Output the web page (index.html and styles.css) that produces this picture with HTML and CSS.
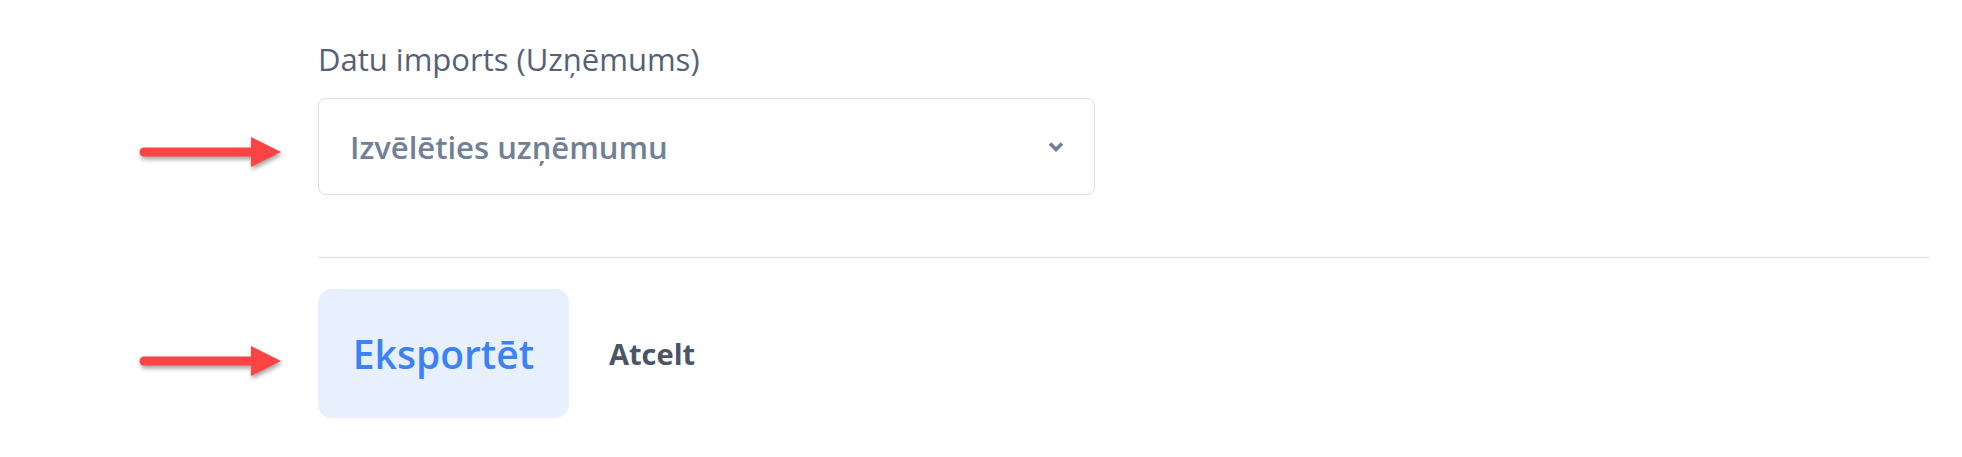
FILE: index.html
```html
<!DOCTYPE html>
<html lang="lv">
<head>
<meta charset="utf-8">
<title>Datu imports</title>
<link rel="stylesheet" href="styles.css">
</head>
<body>
<div class="page">
  <div class="row">
    <div class="gutter"></div>
    <label class="label">Datu imports (Uzņēmums)</label>
  </div>
  <div class="row">
    <div class="gutter">
      <svg class="arrow arrow-select" width="142" height="40" viewBox="0 0 142 40"><line x1="5" y1="20" x2="114" y2="20" stroke="#fd4343" stroke-width="9" stroke-linecap="round"/><polygon points="112,5 142,20 112,35" fill="#fd4343"/></svg>
    </div>
    <div class="select">
      <span class="select-text">Izvēlēties uzņēmumu</span>
      <svg class="chevron" width="16" height="11" viewBox="0 0 16 11"><polyline points="2,2.5 8,8.5 14,2.5" fill="none" stroke="#718096" stroke-width="3.6"/></svg>
    </div>
  </div>
  <div class="row">
    <div class="gutter"></div>
    <hr class="divider">
  </div>
  <div class="row">
    <div class="gutter">
      <svg class="arrow arrow-button" width="142" height="40" viewBox="0 0 142 40"><line x1="5" y1="20" x2="114" y2="20" stroke="#fd4343" stroke-width="9" stroke-linecap="round"/><polygon points="112,5 142,20 112,35" fill="#fd4343"/></svg>
    </div>
    <div class="actions">
      <button class="btn-primary">Eksportēt</button>
      <button class="btn-link">Atcelt</button>
    </div>
  </div>
</div>
</body>
</html>
```

FILE: styles.css
```css
html, body {
  margin: 0;
  padding: 0;
  background: #ffffff;
}

body {
  font-family: "Open Sans", "Noto Sans", "DejaVu Sans", sans-serif;
}

.page {
  padding-top: 39px;
  width: 1962px;
}

.row {
  display: grid;
  grid-template-columns: 318px 1611px;
}

.gutter {
  position: relative;
}

.label {
  display: block;
  font-size: 31px;
  line-height: 40px;
  color: #556176;
  margin-bottom: 19px;
}

.arrow {
  display: block;
  margin-left: 139px;
  filter: drop-shadow(1px 3px 2px rgba(0, 0, 0, 0.35));
}

.arrow-select {
  margin-top: 34px;
}

.arrow-button {
  margin-top: 83px;
}

.select {
  box-sizing: border-box;
  width: 777px;
  height: 97px;
  border: 1px solid #dddddd;
  border-radius: 8px;
  display: flex;
  align-items: center;
  justify-content: space-between;
  padding: 0 30px 0 31px;
}

.select-text {
  font-size: 31px;
  font-weight: 600;
  color: #718096;
}

.chevron {
  display: block;
}

.divider {
  margin: 62px 0 0 0;
  border: 0;
  border-top: 1px solid #dddddd;
  height: 0;
}

.actions {
  display: flex;
  align-items: center;
  gap: 40px;
  margin-top: 31px;
}

.btn-primary {
  width: 251px;
  height: 129px;
  border: 0;
  border-radius: 14px;
  background: #e8f0fe;
  color: #3b82f6;
  font-family: "Open Sans", "Noto Sans", sans-serif;
  font-size: 39px;
  font-weight: 600;
  padding: 0;
  cursor: pointer;
}

.btn-link {
  border: 0;
  background: transparent;
  padding: 0;
  color: #4a5568;
  font-family: "Open Sans", "Noto Sans", sans-serif;
  font-size: 29px;
  font-weight: 700;
  cursor: pointer;
}
```
